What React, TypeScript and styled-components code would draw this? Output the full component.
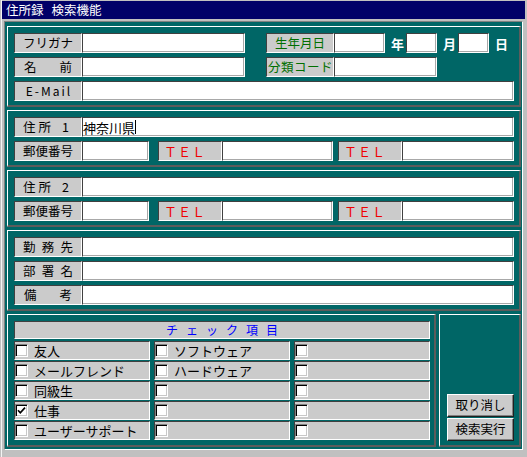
import React from 'react';
import styled, { createGlobalStyle } from 'styled-components';

const Global = createGlobalStyle`
  html, body { margin: 0; padding: 0; background: #c0c0c0; }
  body { font-family: "Noto Sans CJK JP", "Noto Sans", sans-serif; }
  #root { width: 527px; height: 457px; }
`;

const Window = styled.div`
  box-sizing: border-box;
  width: 527px;
  height: 457px;
  background: #c0c0c0;
  padding: 1px 2px 0 2px;
  box-shadow: inset 1px 0 0 #c0c0c0, inset 2px 0 0 #f4f4f4;
`;

const TitleBar = styled.div`
  height: 18px;
  background: #000068;
  color: #fff;
  font-size: 12.5px;
  display: flex;
  align-items: center;
  gap: 8px;
  padding-left: 4px;
  line-height: 1;
`;

const Client = styled.div`
  box-sizing: border-box;
  margin: 2px 2px 0 2px;
  height: 429px;
  background: #006666;
  border: 1px solid;
  border-color: #808080 #fff #fff #808080;
  padding: 4px 1px 2px 2px;
  display: flex;
  flex-direction: column;
  gap: 3px;
`;

const Panel = styled.section`
  box-sizing: border-box;
  border-style: solid;
  border-width: 1px 2px 2px 1px;
  border-color: #fff #5c5c5c #5c5c5c #fff;
  padding: 6px 5px 4px 6px;
  display: flex;
  flex-direction: column;
  gap: 4px;
`;

const Row = styled.div`
  display: flex;
  align-items: center;
  height: 20px;
`;

const Spacer = styled.div<{ $w: number }>`
  width: ${(p) => p.$w}px;
  flex: none;
`;

const toneColor = { black: '#000', green: '#006f00', red: '#f00000' };

const Label = styled.div<{
  $w?: number;
  $tone?: 'black' | 'green' | 'red';
  $align?: 'spread' | 'center' | 'left';
  $pad?: string;
  $ls?: number;
  $size?: number;
}>`
  box-sizing: border-box;
  width: ${(p) => p.$w ?? 68}px;
  height: 20px;
  flex: none;
  background: #cbcbcb;
  border: 1px solid;
  border-color: #404040 #fff #fff #404040;
  display: flex;
  align-items: center;
  justify-content: ${(p) =>
    p.$align === 'spread' ? 'space-between' : p.$align === 'left' ? 'flex-start' : 'center'};
  padding: ${(p) => p.$pad ?? (p.$align === 'spread' ? '0 8px' : '0')};
  color: ${(p) => toneColor[p.$tone ?? 'black']};
  font-size: ${(p) => p.$size ?? 12.5}px;
  letter-spacing: ${(p) => p.$ls ?? 0}px;
  white-space: pre;
  line-height: 1;
`;

const Pair = styled.span`
  display: flex;
  gap: 3px;
`;

const Field = styled.div<{ $w?: number }>`
  box-sizing: border-box;
  height: 20px;
  ${(p) => (p.$w ? `width: ${p.$w}px; flex: none;` : 'flex: 1;')}
  background: #fff;
  border: 1px solid;
  border-color: #404040 #fff #fff #404040;
  box-shadow: inset -1px -1px 0 #a8a8a8;
  display: flex;
  align-items: center;
  font-size: 13px;
  color: #000;
  line-height: 1;
`;

const Caret = styled.span`
  width: 1px;
  height: 14px;
  background: #000;
`;

const Unit = styled.div`
  width: 21px;
  flex: none;
  box-sizing: border-box;
  padding-left: 4px;
  text-align: center;
  color: #fff;
  font-weight: bold;
  font-size: 13px;
  line-height: 1;
`;

const Bottom = styled.div`
  display: flex;
  gap: 3px;
  height: 133px;
`;

const ChecksPanel = styled(Panel)`
  width: 429px;
  padding: 6px 4px 4px 6px;
  gap: 2px;
`;

const ActionPanel = styled(Panel)`
  width: 82px;
  padding: 6px 5px 4px 7px;
  justify-content: flex-end;
  gap: 1px;
`;

const Header = styled.div`
  box-sizing: border-box;
  height: 18px;
  background: #cbcbcb;
  border: 1px solid;
  border-color: #404040 #fff #fff #404040;
  color: #0000ff;
  font-size: 12px;
  letter-spacing: 8px;
  padding-left: 8px;
  display: flex;
  align-items: center;
  justify-content: center;
  line-height: 1;
`;

const CheckGrid = styled.div`
  display: grid;
  grid-template-columns: repeat(3, 136px);
  grid-auto-rows: 19px;
  column-gap: 4px;
  row-gap: 1px;
`;

const CheckRow = styled.div`
  box-sizing: border-box;
  background: #cbcbcb;
  border: 1px solid;
  border-color: #404040 #fff #fff #404040;
  display: flex;
  align-items: center;
  font-size: 13px;
  color: #000;
  line-height: 1;
`;

const Box = styled.span`
  box-sizing: border-box;
  width: 13px;
  height: 13px;
  flex: none;
  background: #fff;
  border: 1px solid;
  border-color: #808080 #fff #fff #808080;
  box-shadow: inset 1px 1px 0 #000, inset -1px -1px 0 #c8c8c8;
  display: flex;
  align-items: center;
  justify-content: center;
`;

const CheckText = styled.span`
  margin-left: 6px;
`;

const Button = styled.button`
  box-sizing: border-box;
  width: 67px;
  height: 23px;
  padding: 0;
  background: #cbcbcb;
  border: 1px solid;
  border-color: #fff #202020 #202020 #fff;
  box-shadow: inset -1px -1px 0 #808080;
  font-family: "Noto Sans CJK JP", sans-serif;
  font-size: 12.5px;
  color: #000;
  line-height: 1;
`;

const Check = () => (
  <svg width="9" height="9" viewBox="0 0 9 9">
    <path d="M1 4.2 L3.3 6.8 L8 1.6" fill="none" stroke="#000" strokeWidth="1.7" />
  </svg>
);

const spread = (s: string) => s.split('').map((c, i) => <span key={i}>{c}</span>);

type Item = { text: string; checked?: boolean };
const checks: Item[][] = [
  [{ text: '友人' }, { text: 'ソフトウェア' }, { text: '' }],
  [{ text: 'メールフレンド' }, { text: 'ハードウェア' }, { text: '' }],
  [{ text: '同級生' }, { text: '' }, { text: '' }],
  [{ text: '仕事', checked: true }, { text: '' }, { text: '' }],
  [{ text: 'ユーザーサポート' }, { text: '' }, { text: '' }],
];

const AddressPanel = ({ n, value }: { n: string; value?: string }) => (
  <Panel>
    <Row>
      <Label $align="spread" $pad="0 12px 0 8px">
        <Pair>
          <span>住</span>
          <span>所</span>
        </Pair>
        <span>{n}</span>
      </Label>
      <Field>
        {value && (
          <>
            <span>{value}</span>
            <Caret />
          </>
        )}
      </Field>
    </Row>
    <Row>
      <Label $align="spread">{spread('郵便番号')}</Label>
      <Field $w={67} />
      <Spacer $w={9} />
      <Label $w={64} $tone="red" $align="left" $pad="0 0 0 5px" $size={13} $ls={1}>
        ＴＥＬ
      </Label>
      <Field $w={111} />
      <Spacer $w={5} />
      <Label $w={64} $tone="red" $align="left" $pad="0 0 0 5px" $size={13} $ls={1}>
        ＴＥＬ
      </Label>
      <Field />
    </Row>
  </Panel>
);

export default function App() {
  return (
    <>
      <Global />
      <Window>
        <TitleBar>
          <span>住所録</span>
          <span>検索機能</span>
        </TitleBar>
        <Client>
          <Panel>
            <Row>
              <Label $align="spread">{spread('フリガナ')}</Label>
              <Field $w={163} />
              <Spacer $w={21} />
              <Label $tone="green">生年月日</Label>
              <Field $w={51} />
              <Unit>年</Unit>
              <Field $w={31} />
              <Unit>月</Unit>
              <Field $w={31} />
              <Unit>日</Unit>
            </Row>
            <Row>
              <Label $align="spread" $pad="0 9px">{spread('名前')}</Label>
              <Field $w={163} />
              <Spacer $w={21} />
              <Label $tone="green" $ls={0.5} $pad="0 0 0 1px">分類コード</Label>
              <Field $w={103} />
            </Row>
            <Row>
              <Label $ls={2} $pad="0 0 0 2px" $size={12}>E-Mail</Label>
              <Field />
            </Row>
          </Panel>
          <AddressPanel n="1" value="神奈川県" />
          <AddressPanel n="2" />
          <Panel>
            <Row>
              <Label $align="spread">{spread('勤務先')}</Label>
              <Field />
            </Row>
            <Row>
              <Label $align="spread">{spread('部署名')}</Label>
              <Field />
            </Row>
            <Row>
              <Label $align="spread" $pad="0 9px">{spread('備考')}</Label>
              <Field />
            </Row>
          </Panel>
          <Bottom>
            <ChecksPanel>
              <Header>チェック項目</Header>
              <CheckGrid>
                {checks.flat().map((it, i) => (
                  <CheckRow key={i}>
                    <Box>{it.checked && <Check />}</Box>
                    {it.text && <CheckText>{it.text}</CheckText>}
                  </CheckRow>
                ))}
              </CheckGrid>
            </ChecksPanel>
            <ActionPanel>
              <Button>取り消し</Button>
              <Button>検索実行</Button>
            </ActionPanel>
          </Bottom>
        </Client>
      </Window>
    </>
  );
}
